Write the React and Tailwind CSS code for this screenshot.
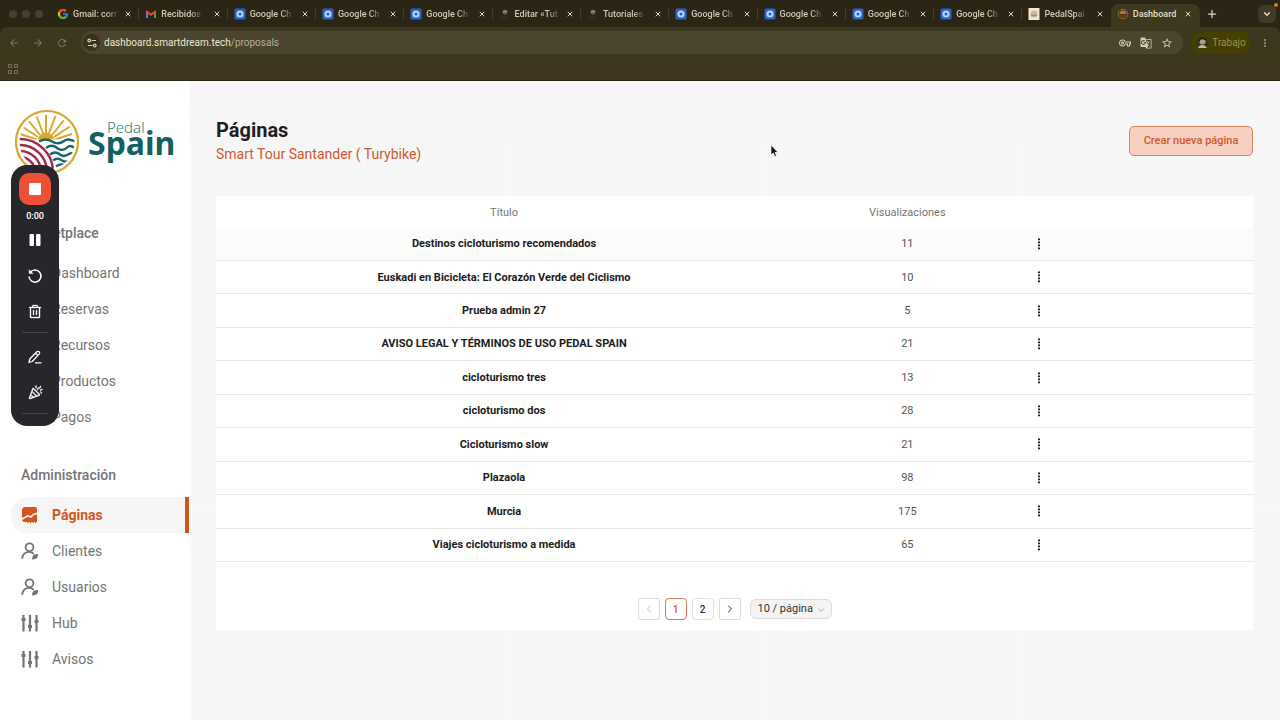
import { useState } from 'react';
import { ChevronDown, ChevronLeft, ChevronRight, X, Plus } from 'lucide-react';
import {
  MdArrowBack,
  MdArrowForward,
  MdRefresh,
  MdOutlineVpnKey,
  MdGTranslate,
  MdStarBorder,
  MdMoreVert,
} from 'react-icons/md';
import { FcGoogle } from 'react-icons/fc';
import { PiTrash, PiConfetti, PiPauseFill } from 'react-icons/pi';

const TABS = [
  { title: 'Gmail: corr', icon: 'google' },
  { title: 'Recibidos', icon: 'gmail' },
  { title: 'Google Ch', icon: 'chrome' },
  { title: 'Google Ch', icon: 'chrome' },
  { title: 'Google Ch', icon: 'chrome' },
  { title: 'Editar «Tut', icon: 'tutorial' },
  { title: 'Tutoriales', icon: 'tutorial' },
  { title: 'Google Ch', icon: 'chrome' },
  { title: 'Google Ch', icon: 'chrome' },
  { title: 'Google Ch', icon: 'chrome' },
  { title: 'Google Ch', icon: 'chrome' },
  { title: 'PedalSpai', icon: 'pedal' },
  { title: 'Dashboard', icon: 'dashboard', active: true },
];

const MARKETPLACE = ['Dashboard', 'Reservas', 'Recursos', 'Productos', 'Pagos'];

const ADMIN = [
  { label: 'Páginas', icon: PageIcon, active: true },
  { label: 'Clientes', icon: UserIcon },
  { label: 'Usuarios', icon: UserIcon },
  { label: 'Hub', icon: SlidersIcon },
  { label: 'Avisos', icon: SlidersIcon },
];

const ROWS = [
  ['Destinos cicloturismo recomendados', 11],
  ['Euskadi en Bicicleta: El Corazón Verde del Ciclismo', 10],
  ['Prueba admin 27', 5],
  ['AVISO LEGAL Y TÉRMINOS DE USO PEDAL SPAIN', 21],
  ['cicloturismo tres', 13],
  ['cicloturismo dos', 28],
  ['Cicloturismo slow', 21],
  ['Plazaola', 98],
  ['Murcia', 175],
  ['Viajes cicloturismo a medida', 65],
];

function PageIcon() {
  return (
    <svg viewBox="0 0 18 18" className="w-[18px] h-[18px] flex-none" fill="currentColor">
      <path d="M1 4.500A3.500 3.500 0 0 1 4.500 1H14a2 2 0 0 1 2 2v3.500l-4 1.200-2.200 2.200-3-.9L1 12z" />
      <path d="M1 14l6-3.200 3.200.9 2.600-2.400L16 8.200V16h-1v1h-1v-1h-1.500v1h-1v-1H10v1H9v-1H7.500v1h-1v-1H3.500A2.500 2.500 0 0 1 1 14z" />
    </svg>
  );
}

function UserIcon() {
  return (
    <svg viewBox="0 0 18 18" className="w-[18px] h-[18px] flex-none" fill="none" stroke="currentColor" strokeWidth="1.800">
      <circle cx="8.500" cy="5.200" r="3.900" />
      <path d="M1.200 16.800c.3-4.300 2.900-6.800 6.500-7 2.200-.1 3.800.6 5 2" />
      <path d="M11.500 14.500c.5-1.800 2.400-2.600 5.500-2.500.2 3-1 5-3.600 5l-1.600.7-.7-.7z" fill="currentColor" stroke="none" />
    </svg>
  );
}

function SlidersIcon() {
  return (
    <svg viewBox="0 0 18 18" className="w-[18px] h-[18px] flex-none" fill="none" stroke="currentColor" strokeWidth="2.200">
      <path d="M2.500 1v16.500M9 1v16.500M15.500 1v16.500" />
      <path d="M.5 5.500h4M7 12.500h4M13.500 7.500h4" strokeWidth="3" />
    </svg>
  );
}

function Logo() {
  return (
    <svg viewBox="0 0 164 66" className="w-[164px] h-[66px]" role="img" aria-label="Pedal Spain">
      <defs>
        <clipPath id="disc">
          <circle cx="32" cy="33" r="27.500" />
        </clipPath>
        <clipPath id="sky">
          <rect x="0" y="0" width="66" height="30.500" />
        </clipPath>
      </defs>
      <circle cx="32" cy="33" r="31" fill="#fff" stroke="#dba62c" strokeWidth="2.200" />
      <g clipPath="url(#disc)">
        <g clipPath="url(#sky)">
          <circle cx="31" cy="32" r="8.500" fill="#dba62c" />
          <path
            d="M31 24V6M28 24L21.500 7M34 24L40.500 7M25 26L13 11M37 26L49 11M23 28L7 17.500M39 28L55 17.500M22 30.500L5 25M40 30.500L57 25"
            stroke="#dba62c"
            strokeWidth="2"
          />
        </g>
        <g fill="none" stroke="#17666a" strokeWidth="2.400">
          <path d="M24 32.500c5-3 9-2.500 13 0s8 2.500 12-.5 6-1 12 .5" />
          <path d="M31 39c4-3 8-2.500 11 0s7 2.500 10-.5 5-1 9 1" />
          <path d="M35 45.500c4-3 7-2.500 10 0s6 1.500 9-.5 5-1 8 1" />
          <path d="M38 51.500c4-3 6-2 9 0s5 1.500 12-1" />
          <path d="M41 57.500c4-3 6-2 14-1" />
        </g>
        <circle cx="5" cy="63" r="34" fill="#fff" />
        <g fill="none" stroke="#a52a45" strokeWidth="2.400">
          <circle cx="5" cy="63" r="33" />
          <circle cx="5" cy="63" r="27" />
          <circle cx="5" cy="63" r="21" />
          <circle cx="5" cy="63" r="15" />
          <circle cx="5" cy="63" r="9" />
        </g>
      </g>
      <text x="92" y="24" fill="#39797a" fontSize="15" fontWeight="300" fontFamily="'Noto Sans', 'Open Sans', sans-serif">Pedal</text>
      <text x="73" y="46" fill="#155f62" fontSize="32" fontWeight="700" fontFamily="'Noto Sans', sans-serif">Spain</text>
    </svg>
  );
}

function Favicon({ type }) {
  if (type === 'google') return <FcGoogle className="w-3 h-3 flex-none" />;
  if (type === 'gmail') {
    return (
      <svg viewBox="0 0 12 12" className="w-3 h-3 flex-none">
        <path d="M1 3v7h2V4z" fill="#4285f4" />
        <path d="M11 3v7H9V4z" fill="#34a853" />
        <path d="M1 2.500h1L6 5.500l4-3h1v2L6 8 1 4.500z" fill="#ea4335" />
      </svg>
    );
  }
  if (type === 'chrome') {
    return (
      <svg viewBox="0 0 12 12" className="w-3 h-3 flex-none">
        <rect x=".5" y=".5" width="11" height="11" rx="1.500" fill="#2c63c8" />
        <circle cx="6" cy="6" r="3.600" fill="#b5d2ff" />
        <circle cx="6" cy="6" r="1.500" fill="#2560d0" />
      </svg>
    );
  }
  if (type === 'pedal') {
    return (
      <svg viewBox="0 0 12 12" className="w-3 h-3 flex-none">
        <rect width="11" height="12" x=".5" fill="#eee9d4" />
        <circle cx="6" cy="6" r="3.500" fill="#d8b59a" />
        <path d="M3 7.500h6" stroke="#8a8f87" strokeWidth="1.500" />
      </svg>
    );
  }
  if (type === 'dashboard') {
    return (
      <svg viewBox="0 0 12 12" className="w-3 h-3 flex-none">
        <circle cx="6" cy="6" r="4.800" fill="#4a3218" stroke="#94622a" />
        <path d="M2.500 6a3.500 3.500 0 0 1 7 0z" fill="#b0762f" />
        <path d="M3 8h6" stroke="#6b5233" />
      </svg>
    );
  }
  return (
    <svg viewBox="0 0 12 12" className="w-3 h-3 flex-none">
      <circle cx="6" cy="4" r="2.500" fill="#6f6350" />
      <path d="M4 3.500h4" stroke="#a39680" />
      <path d="M2 9.500h8" stroke="#3a3122" strokeWidth="1.500" />
    </svg>
  );
}

function Tab({ tab, last }) {
  return (
    <div
      className={`relative flex-1 min-w-0 flex items-center justify-between pl-1.5 ${
        tab.active ? 'bg-[#3d3820] rounded-t-lg mt-1 pb-1 pr-2' : 'pr-[7px]'
      }`}
    >
      <div className="flex items-center gap-1">
        <Favicon type={tab.icon} />
        <span
          className={`whitespace-nowrap text-[9px] leading-3 font-medium ${
            tab.active
              ? 'text-[#e6dfc4]'
              : 'text-[#cfc8b1] [mask-image:linear-gradient(to_right,black_75%,rgb(0_0_0/0.2))]'
          }`}
        >
          {tab.title}
        </span>
      </div>
      <button aria-label={`Cerrar ${tab.title}`} className="text-[#ded7bf]">
        <X className="w-2 h-2" strokeWidth={3} />
      </button>
      {!tab.active && !last && <span className="absolute right-0 h-3 w-px bg-[#423c26]" />}
    </div>
  );
}

function BrowserBar() {
  return (
    <header className="flex-none bg-[#2b2516]">
      <div className="h-[27px] flex">
        <div className="w-[51px] flex items-center gap-[5px] pl-[9px] flex-none">
          <span className="w-2 h-2 rounded-full bg-[#464033]" />
          <span className="w-2 h-2 rounded-full bg-[#464033]" />
          <span className="w-2 h-2 rounded-full bg-[#464033]" />
        </div>
        <div className="flex-1 min-w-0 flex">
          {TABS.map((tab, i) => (
            <Tab key={i} tab={tab} last={i === TABS.length - 2} />
          ))}
        </div>
        <div className="w-20 flex-none flex items-center justify-between pl-1.5 pr-1 text-[#ded7bf]">
          <button aria-label="Nueva pestaña">
            <Plus className="w-3 h-3" strokeWidth={2.500} />
          </button>
          <button aria-label="Buscar pestañas" className="relative w-[18px] h-[18px] rounded-md bg-[#413a29] flex items-center justify-center">
            <ChevronDown className="w-2.5 h-2.5" strokeWidth={3.500} />
            <span className="absolute -top-0.5 -right-0.5 w-1 h-1 rounded-full bg-[#d9821c]" />
          </button>
        </div>
      </div>

      <div className="bg-linear-to-b from-[#3d3820] via-[#3a371c] to-[#40361f] rounded-t-lg border-b border-[#292515]">
        <div className="h-[31px] flex items-center pl-2 pr-[9px]">
          <div className="w-[73px] flex-none flex items-center gap-3 text-[#79735b]">
            <button aria-label="Atrás"><MdArrowBack className="w-3 h-3" /></button>
            <button aria-label="Adelante"><MdArrowForward className="w-3 h-3" /></button>
            <button aria-label="Recargar"><MdRefresh className="w-3 h-3" /></button>
          </div>
          <div className="flex-1 h-[23px] rounded-full bg-[#4b4530] flex items-center pl-[2px] pr-2.5 text-[#d5cdb3]">
            <span className="w-[17px] h-[17px] rounded-full bg-[#37321c] flex items-center justify-center">
              <svg viewBox="0 0 10 10" className="w-2.5 h-2.5" fill="none" stroke="currentColor" strokeWidth="1.200">
                <circle cx="2.200" cy="2.500" r="1.300" />
                <path d="M4.500 2.500H9M1 7.500h4.500" />
                <circle cx="7.800" cy="7.500" r="1.300" />
              </svg>
            </span>
            <a href="#" className="ml-1 text-[10px] leading-4 text-[#b5ae94]">
              <span className="text-[#ece5cc]">dashboard.smartdream.tech</span>/proposals
            </a>
            <div className="ml-auto flex items-center gap-[9px]">
              <MdOutlineVpnKey className="w-3 h-3" />
              <MdGTranslate className="w-3 h-3" />
              <MdStarBorder className="w-3 h-3" />
            </div>
          </div>
          <button className="ml-2 h-[22px] w-[60px] rounded-full bg-[#453f02] flex items-center justify-center gap-1 text-[10px] text-[#99914c]">
            <svg viewBox="0 0 12 12" className="w-3 h-3">
              <circle cx="6" cy="6" r="6" fill="#393423" />
              <circle cx="6.500" cy="4.500" r="3" fill="#a8a18c" />
              <path d="M2 11c1-4 7-4 9 0z" fill="#c0b9a5" />
              <path d="M3 4c1-3 5-3 6.500-1" stroke="#1f1b10" strokeWidth="1.500" fill="none" />
            </svg>
            Trabajo
          </button>
          <button aria-label="Menú" className="ml-2 text-[#99917a]">
            <MdMoreVert className="w-3 h-3" />
          </button>
        </div>
        <div className="h-[22px] pl-2 flex items-center text-[#79735b]">
          <svg viewBox="0 0 10 10" className="w-2.5 h-2.5" fill="none" stroke="currentColor">
            <path d="M.5.5h3v3h-3zM6.500.5h3v3h-3zM.5 6.500h3v3h-3zM6.500 6.500h3v3h-3z" />
          </svg>
        </div>
      </div>
    </header>
  );
}

function Sidebar() {
  return (
    <aside className="w-[190px] flex-none bg-white text-sm text-[#757575]">
      <div className="pt-7 pl-[15px] h-[134px]">
        <Logo />
      </div>
      <nav>
        <h2 className="h-9 pl-[21px] flex items-center font-medium">Marketplace</h2>
        <ul className="mt-1">
          {MARKETPLACE.map((label) => (
            <li key={label}>
              <a href="#" className="h-9 pl-[52px] flex items-center">{label}</a>
            </li>
          ))}
        </ul>
        <h2 className="mt-[22px] h-9 pl-[21px] flex items-center font-medium">Administración</h2>
        <ul className="mt-1 pl-[11px] pr-px">
          {ADMIN.map((item) => (
            <li key={item.label}>
              <a
                href="#"
                className={`h-9 pl-2.5 flex items-center gap-[13px] ${
                  item.active
                    ? 'bg-[#f6f6f6] text-[#d4541d] font-bold rounded-l-2xl border-r-4 border-[#d4541d]'
                    : ''
                }`}
              >
                <item.icon />
                {item.label}
              </a>
            </li>
          ))}
        </ul>
      </nav>
    </aside>
  );
}

function Recorder() {
  return (
    <div className="absolute left-[11px] top-[165px] w-12 pt-2 pb-3 rounded-2xl bg-[#27262b] text-white flex flex-col items-center">
      <button aria-label="Detener" className="w-8 h-8 rounded-[10px] bg-[#ee4f37] flex items-center justify-center">
        <span className="w-3 h-3 rounded-[1px] bg-white" />
      </button>
      <span className="h-[22px] pt-0.5 flex items-center text-[9px] font-medium">0:00</span>
      <button aria-label="Pausar" className="h-[26px] flex items-center"><PiPauseFill className="w-4 h-4" /></button>
      <button aria-label="Reiniciar" className="mt-[5px] h-9 flex items-center">
        <svg viewBox="0 0 16 16" className="w-4 h-4" fill="none" stroke="currentColor" strokeWidth="1.500">
          <path d="M3.200 4.500A6 6 0 1 1 2 8.500" />
          <path d="M2.200 1.800v3.700h3.700z" fill="currentColor" strokeWidth=".5" />
        </svg>
      </button>
      <button aria-label="Eliminar" className="h-9 flex items-center"><PiTrash className="w-4 h-4" strokeWidth={6} /></button>
      <hr className="w-[26px] my-0.5 border-[#45444a]" />
      <button aria-label="Dibujar" className="mt-1 h-9 flex items-center">
        <svg viewBox="0 0 16 16" className="w-4 h-4" fill="none" stroke="currentColor" strokeWidth="1.300" strokeLinejoin="round">
          <path d="M2 13.500l.8-3.500 7-7.200a1.600 1.600 0 0 1 2.300 2.300L5.200 12.500zM8.500 4.200l2.300 2.300M8 13.800h6.500" />
        </svg>
      </button>
      <button aria-label="Confeti" className="h-9 flex items-center"><PiConfetti className="w-4 h-4" strokeWidth={6} /></button>
      <hr className="w-[26px] mt-0.5 border-[#45444a]" />
    </div>
  );
}

function PagesTable() {
  return (
    <table className="w-full h-[366px] table-fixed text-[11px] text-[#555] text-center">
      <colgroup>
        <col className="w-5/9" />
        <col className="w-2/9" />
        <col className="w-2/9" />
      </colgroup>
      <thead>
        <tr className="h-8 text-[#757575]">
          <th className="pt-0.5 font-normal">Título</th>
          <th className="pt-0.5 font-normal">Visualizaciones</th>
          <th aria-label="Acciones" />
        </tr>
      </thead>
      <tbody>
        {ROWS.map(([title, views]) => (
          <tr key={title} className="border-b border-[#e6e6e6] first:bg-[#fbfbfb]">
            <td className="pt-px font-bold text-[#1c1c1c]">{title}</td>
            <td className="pt-px">{views}</td>
            <td className="pl-[11px] text-left">
              <button aria-label={`Opciones de ${title}`} className="block px-0.5 text-[#1c1c1c]">
                <svg viewBox="0 0 6 12" className="w-1.5 h-3" fill="currentColor">
                  <path d="M2 .5h2v1.700H2zM2 3.500h2v1.700H2zM2 6.500h2v1.700H2zM2 9.500h2v1.700H2z" />
                </svg>
              </button>
            </td>
          </tr>
        ))}
      </tbody>
    </table>
  );
}

function Pagination({ page, setPage }) {
  return (
    <div className="flex justify-center items-center gap-[5px] text-[10px] text-[#333]">
      <button
        aria-label="Anterior"
        disabled={page === 1}
        onClick={() => setPage(page - 1)}
        className="w-[22px] h-[22px] rounded-xs border border-[#dcdcdc] flex items-center justify-center disabled:text-[#c4c4c4]"
      >
        <ChevronLeft className="w-3 h-3" />
      </button>
      {[1, 2].map((n) => (
        <button
          key={n}
          onClick={() => setPage(n)}
          className={`w-[22px] h-[22px] rounded border font-medium ${
            n === page ? 'border-[#d97b58] text-[#d4541d]' : 'border-[#e2e2e2]'
          }`}
        >
          {n}
        </button>
      ))}
      <button
        aria-label="Siguiente"
        onClick={() => setPage(2)}
        className="w-[22px] h-[22px] rounded-xs border border-[#dcdcdc] flex items-center justify-center"
      >
        <ChevronRight className="w-3 h-3" />
      </button>
      <div className="relative ml-1">
        <select
          aria-label="Resultados por página"
          className="block appearance-none w-[82px] h-5 pl-[7px] rounded-md border border-[#dcdcdc] bg-[#f4f4f4] text-[11px] leading-4"
        >
          <option>10 / página</option>
          <option>20 / página</option>
        </select>
        <ChevronDown className="absolute right-1.5 top-1.5 w-2.5 h-2.5 text-[#999] pointer-events-none" />
      </div>
    </div>
  );
}

export default function App() {
  const [page, setPage] = useState(1);

  return (
    <div className="relative min-h-screen flex flex-col bg-[#f7f7f7] font-[Roboto,sans-serif]">
      <BrowserBar />
      <div className="flex-1 flex">
        <Sidebar />
        <main className="flex-1 min-w-0 pr-[27px] pl-[26px] pt-[37px] bg-linear-to-b from-[#f7f5f9] to-[#f7f7f7] to-10%">
          <div className="flex items-start justify-between">
            <div>
              <h1 className="text-xl leading-6 font-bold text-[#1f1f1f]">Páginas</h1>
              <p className="text-sm leading-6 text-[#d05a2b]">Smart Tour Santander ( Turybike)</p>
            </div>
            <button className="mt-2 h-[30px] w-[124px] rounded-[5px] border border-[#d98360] bg-[#f7d0c1] text-[11px] font-medium text-[#d05a2b]">
              Crear nueva página
            </button>
          </div>
          <section className="mt-[30px] bg-white pb-2.5">
            <PagesTable />
            <div className="mt-9">
              <Pagination page={page} setPage={setPage} />
            </div>
          </section>
        </main>
      </div>
      <Recorder />
      {/* Mouse pointer */}
      <svg viewBox="0 0 10 14" className="absolute left-[770px] top-[144px] w-2.5 h-3.5">
        <path d="M1 1v10l2.300-2 1.500 3.500 1.700-.7L5 8.500h3z" fill="#111" stroke="#fff" strokeWidth=".7" />
      </svg>
    </div>
  );
}
